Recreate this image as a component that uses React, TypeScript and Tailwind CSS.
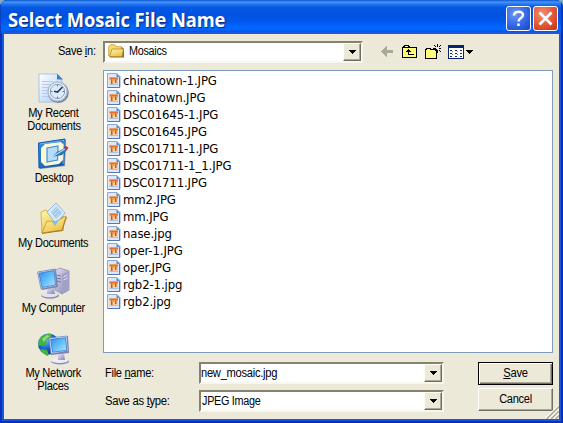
import React from "react";

const files: string[] = [
  "chinatown-1.JPG",
  "chinatown.JPG",
  "DSC01645-1.JPG",
  "DSC01645.JPG",
  "DSC01711-1.JPG",
  "DSC01711-1_1.JPG",
  "DSC01711.JPG",
  "mm2.JPG",
  "mm.JPG",
  "nase.jpg",
  "oper-1.JPG",
  "oper.JPG",
  "rgb2-1.jpg",
  "rgb2.jpg",
];

function Gradients() {
  return (
    <svg width="0" height="0" className="absolute">
      <defs>
        <linearGradient id="screen" x1="0" y1="0" x2="1" y2="1">
          <stop offset="0" stopColor="#2f8fec" />
          <stop offset="0.5" stopColor="#62bff9" />
          <stop offset="1" stopColor="#b9eaff" />
        </linearGradient>
        <linearGradient id="paper" x1="0" y1="0" x2="1" y2="1">
          <stop offset="0" stopColor="#ffffff" />
          <stop offset="1" stopColor="#a9caf5" />
        </linearGradient>
        <linearGradient id="folder" x1="0" y1="0" x2="0.6" y2="1">
          <stop offset="0" stopColor="#fff6b0" />
          <stop offset="1" stopColor="#efc244" />
        </linearGradient>
        <linearGradient id="metal" x1="0" y1="0" x2="1" y2="1">
          <stop offset="0" stopColor="#e4e4f4" />
          <stop offset="1" stopColor="#8482b4" />
        </linearGradient>
        <linearGradient id="blotter" x1="0" y1="0" x2="1" y2="1">
          <stop offset="0" stopColor="#2f8ee0" />
          <stop offset="1" stopColor="#0a50a8" />
        </linearGradient>
        <radialGradient id="globe" cx="0.35" cy="0.3" r="0.75">
          <stop offset="0" stopColor="#7cc0ff" />
          <stop offset="0.55" stopColor="#1c62d4" />
          <stop offset="1" stopColor="#0a2f86" />
        </radialGradient>
      </defs>
    </svg>
  );
}

function RecentIcon() {
  return (
    <svg width="33" height="33" viewBox="0 0 33 33">
      <path d="M2 2h18l5 5v23H2z" fill="url(#paper)" stroke="#9db8e4" strokeWidth=".8" />
      <path d="M20 1.500v6h6z" fill="#3e7ed0" />
      <path d="M5 9.500h11M5 12.500h9M5 15.500h7M5 18.500h5M5 21.500h5M5 24.500h6" stroke="#b5caec" />
      <circle cx="21.300" cy="20.500" r="10.500" fill="#76839a" />
      <circle cx="20.500" cy="19.500" r="9.500" fill="#f3f7fc" stroke="#aebccf" strokeWidth="1.500" />
      <circle cx="20.500" cy="19.500" r="7.200" fill="#dcecfb" stroke="#6d8ab0" strokeWidth=".8" />
      <path d="M20.500 12.500v2M20.500 24.500v2M13.500 19.500h2M25.500 19.500h2" stroke="#4a7fc0" />
      <path d="M25.500 15l-5 5-3.500-.8" fill="none" stroke="#283a58" strokeWidth="1.600" />
    </svg>
  );
}

function DesktopIcon() {
  return (
    <svg width="33" height="33" viewBox="0 0 33 33">
      <path d="M3 7l26-4-1 26-25 3z" fill="#7d8ba1" />
      <path d="M1.500 6L28 2l-1.500 26L2 31z" fill="url(#blotter)" stroke="#1a5caf" />
      <path d="M4 11l4-4 16-2 3 3-1 15-4 4-14 2-4-4z" fill="#fbf8d3" />
      <path d="M3 7l24-3.500-1 23.500" fill="none" stroke="#80c4ff" strokeWidth=".8" />
      <path d="M10 11l11-2-.5 14L10 25z" fill="#b7dcfc" stroke="#3c91df" strokeWidth="1.200" />
      <path d="M15 20l5-5 8-4 2 2-5 5z" fill="#286fb7" />
      <path d="M15 20l13-8" stroke="#b6defb" strokeWidth="1.300" />
      <path d="M26.500 10l3-1 2 2-2 2.500z" fill="#b93d30" />
    </svg>
  );
}

function DocumentsIcon() {
  return (
    <svg width="33" height="33" viewBox="0 0 33 33">
      <path d="M5 10l5-2 3 4 14 2v15L5 31z" fill="#e4b945" />
      <path d="M4 10l5-2 3 3 12 2-3 15-16 3z" fill="url(#folder)" stroke="#c9992e" strokeWidth=".7" />
      <path d="M10 10L19 1l9 10-9 11z" fill="#d7eafd" stroke="#81afd9" strokeWidth=".8" />
      <path d="M14 10l5.500-5.500L25 11l-6 6z" fill="#9fcaf0" />
      <path d="M15 11l5-5M17 13l5-5M19 15l4-4" stroke="#c5e0f8" />
      <path d="M5 31l5-12 9 .5L29 14l-4 14z" fill="url(#folder)" stroke="#c7922b" strokeWidth=".8" />
      <path d="M15 20l7-2-4 6z" fill="#80bded" />
      <path d="M5 31.500l20-3L29.500 15" fill="none" stroke="#a8792a" />
    </svg>
  );
}

function Monitor() {
  return (
    <g>
      <ellipse cx="13" cy="28.500" rx="9" ry="3.200" fill="#8f8dae" />
      <ellipse cx="12.500" cy="27.500" rx="8.500" ry="2.800" fill="#e2e2f1" />
      <path d="M10 21h7l1 6h-8z" fill="url(#metal)" />
      <path d="M1 5l18-3 2 18-16 3z" fill="#827fae" />
      <path d="M.5 5L18 2l1.500 17L4 22z" fill="#e1e6f6" stroke="#6979ad" strokeWidth=".7" />
      <path d="M2 6.200l15-2.700 1.500 14.500L5 20.500z" fill="url(#screen)" stroke="#1e69c8" strokeWidth=".7" />
    </g>
  );
}

function ComputerIcon() {
  return (
    <svg width="33" height="33" viewBox="0 0 33 33">
      <path d="M17 4l6-3 9 3v19l-7 4-7-4z" fill="url(#metal)" stroke="#8886ad" strokeWidth=".7" />
      <path d="M25 7l7-3v19l-7 4z" fill="#a3a0c8" />
      <path d="M20 8l4 1M20 11l4 1M20 14l4 1" stroke="#6e6e9a" />
      <path d="M26.500 10l4-2M26.500 13l4-2" stroke="#e0dff1" />
      <Monitor />
    </svg>
  );
}

function NetworkIcon() {
  return (
    <svg width="33" height="33" viewBox="0 0 33 33">
      <circle cx="11.500" cy="12" r="10.500" fill="url(#globe)" />
      <path d="M2 8c3-5 8-7 13-6l-2 4-4 2 1 3-4 3-3-1-2 3zM4 17l6 1 2 5-2 1c-4-2-6-5-7-6z" fill="#43b43c" />
      <path d="M5 7l5-4 3 1-4 3-2 3z" fill="#90df72" />
      <g transform="translate(12 2)">
        <ellipse cx="11" cy="27.500" rx="9" ry="3" fill="#9290b1" />
        <ellipse cx="10.500" cy="26.500" rx="8.500" ry="2.600" fill="#ededf7" />
        <path d="M9 20h6l1 6H9z" fill="url(#metal)" />
        <path d="M1 4l18-2 1 17-18 2z" fill="#8380ae" />
        <path d="M0 4l18-2 1 15-17 3z" fill="#e6ebf9" stroke="#5672ac" strokeWidth=".6" />
        <path d="M1.700 5.300l15-1.600 1 12.600-14.200 2z" fill="url(#screen)" stroke="#1d68c2" strokeWidth=".7" />
      </g>
    </svg>
  );
}

function FileIcon() {
  return (
    <svg width="14" height="15" viewBox="0 0 14 15" className="shrink-0">
      <path d="M.5.500h9.500l3 3v11H.5z" fill="#dce8fa" stroke="#8ba8d6" />
      <path d="M12.500 4v10.500H.5" fill="none" stroke="#527bb5" />
      <path d="M9.500.500v3.500h3.500z" fill="#5b8bc9" />
      <rect x="2.500" y="4" width="8.500" height="7" fill="#f6cf9a" />
      <path d="M2.500 4.500h8.500v2H2.500z" fill="#e4702c" />
      <path d="M4 6.500h1.500V11H4zM8 6.500h1.500V10H8z" fill="#c65a2c" />
      <path d="M5.500 6h2v2h-2z" fill="#f4a12c" />
      <path d="M2.500 11h8.500v1H2.500z" fill="#a6c3e7" />
    </svg>
  );
}

function FolderIcon() {
  return (
    <svg width="17" height="15" viewBox="0 0 17 15">
      <path d="M2 13.500L1 3l2-2h4l2 2h5l2 2v8.500z" fill="#7d6a3c" />
      <path d="M.7 12V2.500L2.500.700h4l2 2h5V12z" fill="#f5db70" stroke="#c39a34" strokeWidth=".8" />
      <path d="M1.500 12.500l2.500-7.500h11.500L14 12.500z" fill="url(#folder)" stroke="#b48b2d" strokeWidth=".8" />
    </svg>
  );
}

function ToolbarIcons() {
  return (
    <div className="ml-[18px] flex h-[15px] items-center">
      <svg width="13" height="13" viewBox="0 0 13 13" shapeRendering="crispEdges">
        <path d="M0 6.500l6-5.500v4h6v3H6v4z" fill="#aaa898" />
      </svg>
      <svg className="ml-2" width="16" height="14" viewBox="0 0 16 14" shapeRendering="crispEdges">
        <path d="M.5 2.500h1v-1h1v-1h4v1h1v1h7v10H.5z" fill="#ffff7b" stroke="#000" />
        <path d="M1 2.500h6" stroke="#000" />
        <path d="M6 4h1v1h1v1h1v1H7v2h5v1H6V7H4V6h1V5h1z" fill="#000" />
      </svg>
      <svg className="ml-[7px]" width="17" height="15" viewBox="0 0 17 15" shapeRendering="crispEdges">
        <path d="M.5 5.500h1v-1h4v1h6v9H.5z" fill="#ffff7b" stroke="#000" />
        <path d="M12 0h1v3h-1zM12 6h1v3h-1zM8 4h3v1H8zM14 4h2v1h-2zM9 1h1v1H9zM10 2h1v1h-1zM15 1h1v1h-1zM14 2h1v1h-1zM14 6h1v1h-1zM15 7h1v1h-1zM10 6h1v1h-1z" fill="#000" />
      </svg>
      <svg className="ml-[6px]" width="26" height="14" viewBox="0 0 26 14" shapeRendering="crispEdges">
        <path d="M.5.500h15v13H.5z" fill="#fff" stroke="#09246c" />
        <path d="M0 0h16v3H0z" fill="#09246c" />
        <path d="M2 5h2v1H2zM7 5h2v1H7zM12 5h2v1h-2zM2 8h2v1H2zM7 8h2v1H7zM12 8h2v1h-2zM2 11h2v1H2zM7 11h2v1H7zM12 11h2v1h-2z" fill="#17276c" />
        <path d="M4 6h1v1H4zM9 6h1v1H9zM4 9h1v1H4zM9 9h1v1H9z" fill="#777" />
        <path d="M18 5h7v1h-1v1h-1v1h-1v1h-1V8h-1V7h-1V6h-1z" fill="#000" />
      </svg>
    </div>
  );
}

function Combo({ children, className }: { children: React.ReactNode; className: string }) {
  return (
    <div className={`flex h-[22px] border-2 border-t-[#85826f] border-l-[#85826f] border-r-[#f8f7ef] border-b-[#f8f7ef] bg-white ${className}`}>
      <div className="flex min-w-0 flex-1 items-center whitespace-pre">{children}</div>
      <div className="flex w-[18px] items-center justify-center border border-t-[#fffef5] border-l-[#fffef5] border-r-[#706e60] border-b-[#706e60] bg-[#ece9d8] shadow-[inset_-1px_-1px_#aca899]">
        <svg width="7" height="4" viewBox="0 0 7 4" shapeRendering="crispEdges">
          <path d="M0 0h7v1H6v1H5v1H4v1H3V3H2V2H1V1H0z" />
        </svg>
      </div>
    </div>
  );
}

const small = "text-[12px] leading-[13px] text-black tracking-[-0.3px] whitespace-nowrap";

function Place({ icon, lines }: { icon: React.ReactNode; lines: string[] }) {
  return (
    <div className="flex h-[65px] flex-col items-center">
      <div className="h-[35px]">{icon}</div>
      {lines.map((line) => (
        <div key={line} className={`${small} scale-x-[0.92]`}>{line}</div>
      ))}
    </div>
  );
}

export default function App() {
  return (
    <div className="flex h-[423px] w-[563px] flex-col overflow-hidden bg-[#8ba9bd] font-['Liberation_Sans',Arial,sans-serif]">
      <Gradients />
      <div className="flex h-full flex-col overflow-hidden rounded-t-[7px] bg-[#0831b8]">
        <header className="flex h-[34px] shrink-0 items-center justify-between bg-[linear-gradient(180deg,#0a55cf_0px,#4794fb_2px,#2778ef_4px,#0759e4_7px,#0052df_14px,#0057e9_21px,#0266ff_27px,#0265fb_30px,#0149cf_33px,#003dbd_34px)] pl-2 pr-[5px] shadow-[inset_1px_0_#0a3fc4,inset_-2px_0_#0a35b4]">
          <h1 className="origin-left scale-x-[0.915] pt-[5px] font-['Open_Sans',sans-serif] text-[20px] leading-[28px] font-bold tracking-[-0.1px] whitespace-nowrap text-white [text-shadow:1px_1px_1px_#0b2a86]">Select Mosaic File Name</h1>
          <div className="flex gap-[2px] pt-[3px]">
            <div className="flex h-[25px] w-[25px] items-center justify-center rounded-[3px] border border-white bg-[radial-gradient(circle_at_35%_30%,#6d96f5,#2d62e3_60%,#1747c2)]">
              <svg width="15" height="17" viewBox="0 0 15 17" fill="none" stroke="white" strokeWidth="2.500"><path d="M3 5.500c0-5 9-5 9-.5 0 3-4.500 3-4.500 6.500" /><path d="M7.500 13.500v2.500" /></svg>
            </div>
            <div className="flex h-[25px] w-[25px] items-center justify-center rounded-[3px] border border-white bg-[radial-gradient(circle_at_35%_30%,#f09272,#df5030_60%,#bd3412)]">
              <svg width="15" height="15" viewBox="0 0 15 15" stroke="white" strokeWidth="2.700"><path d="M1.500 1.500l12 12M13.500 1.500l-12 12" /></svg>
            </div>
          </div>
        </header>
        <main className="mr-[4px] mb-[4px] ml-[4px] flex min-h-0 flex-1 flex-col bg-[#ece9d8] shadow-[0_0_0_2px_#1a55e4]">
          <div className="flex h-[36px] shrink-0 items-center pb-[1px]">
            <div className={`${small} w-[99px] pl-[54px]`}><div className="origin-left scale-x-[0.92]">Save <u>i</u>n:</div></div>
            <Combo className="w-[260px]">
              <span className="ml-[3px]"><FolderIcon /></span>
              <span className={`${small} ml-[4px] origin-left scale-x-[0.9]`}>Mosaics</span>
            </Combo>
            <ToolbarIcons />
          </div>
          <div className="flex min-h-0 flex-1">
            <nav className="w-[99px] shrink-0 pt-[2px]">
              <Place icon={<RecentIcon />} lines={["My Recent", "Documents"]} />
              <Place icon={<DesktopIcon />} lines={["Desktop"]} />
              <Place icon={<DocumentsIcon />} lines={["My Documents"]} />
              <Place icon={<ComputerIcon />} lines={["My Computer"]} />
              <Place icon={<NetworkIcon />} lines={["My Network", "Places"]} />
            </nav>
            <section className="flex w-[450px] shrink-0 flex-col">
              <div className="h-[283px] border border-[#7f9db9] bg-white pt-px pl-[3px]">
                {files.map((name) => (
                  <div key={name} className="flex h-[17px] items-center">
                    <FileIcon />
                    <span className="ml-[2px] font-['DejaVu_Sans_Condensed','DejaVu_Sans',sans-serif] text-[13px] leading-[17px] tracking-[-0.1px] whitespace-nowrap text-black">{name}</span>
                  </div>
                ))}
              </div>
              <div className="flex pt-[9px]">
                <div className="flex w-[341px] flex-col gap-[6px]">
                  <div className="flex items-center">
                    <label className={`${small} w-[96px] pl-[2px]`}><div className="origin-left scale-x-[0.92]">File <u>n</u>ame:</div></label>
                    <Combo className="w-[245px]"><span className={`${small} origin-left scale-x-[0.93]`}>new_mosaic.jpg</span></Combo>
                  </div>
                  <div className="flex items-center">
                    <label className={`${small} w-[96px] pl-[2px]`}><div className="origin-left scale-x-[0.94]">Save as <u>t</u>ype:</div></label>
                    <Combo className="w-[245px]"><span className={`${small} ml-px origin-left scale-x-[0.9]`}>JPEG Image</span></Combo>
                  </div>
                </div>
                <div className="ml-[34px] flex w-[75px] flex-col gap-[3px]">
                  <button className={`${small} h-[23px] border border-black shadow-[inset_1px_1px_#fff,inset_-1px_-1px_#716f64,inset_-2px_-2px_#aca899]`}><div className="scale-x-[0.93]"><u>S</u>ave</div></button>
                  <button className={`${small} h-[23px] border border-t-white border-l-white border-r-[#716f64] border-b-[#716f64] shadow-[inset_-1px_-1px_#aca899]`}><div className="scale-x-[0.92]">Cancel</div></button>
                </div>
              </div>
            </section>
            <svg className="mt-auto -ml-2 shrink-0" width="14" height="14" viewBox="0 0 14 14">
              <path d="M0 14L14 0M4.500 14L14 4.500M9 14l5-5" stroke="#fff" strokeWidth="1.300" />
              <path d="M1.500 14L14 1.500M6 14l8-8M10.500 14l3.500-3.500" stroke="#aaa795" strokeWidth="1.500" />
            </svg>
          </div>
        </main>
      </div>
    </div>
  );
}
